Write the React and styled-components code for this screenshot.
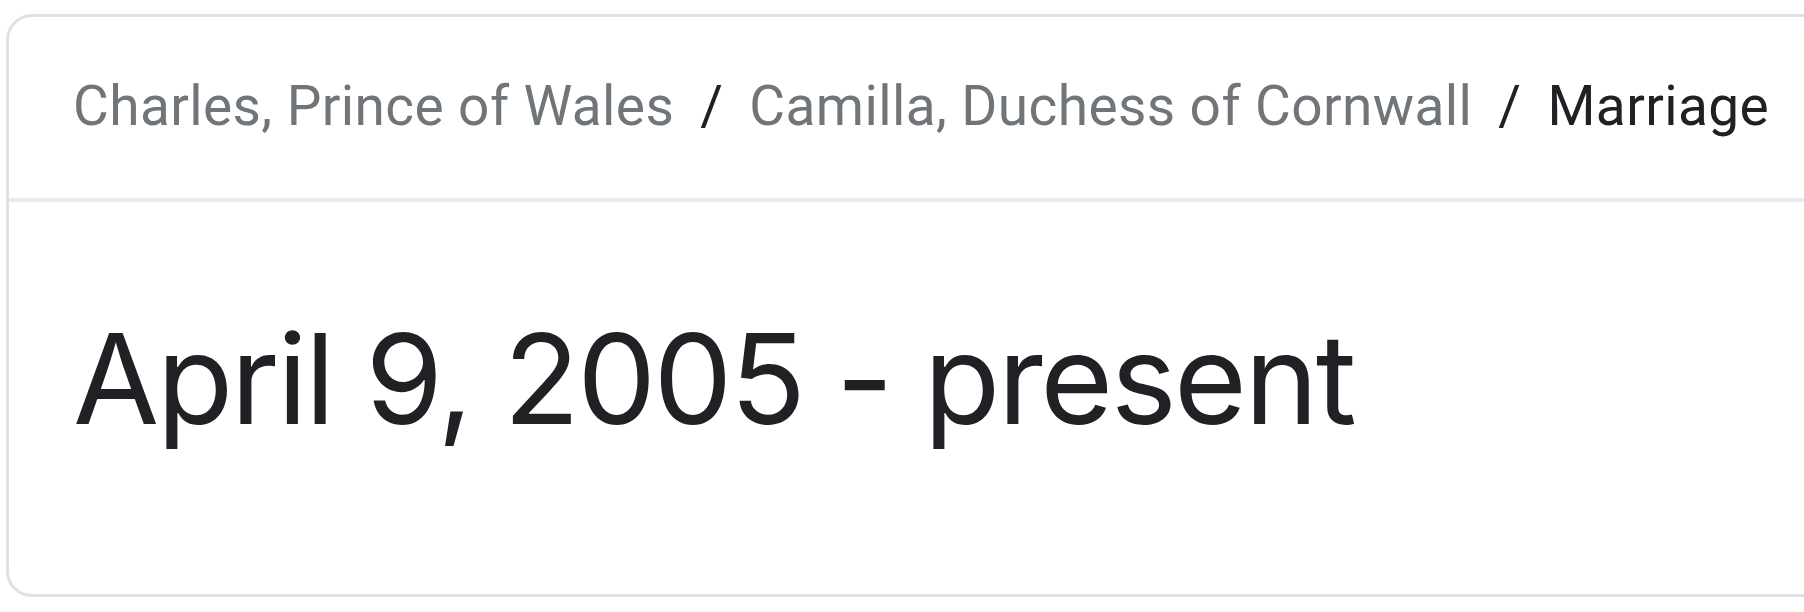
import React from "react";
import styled, { createGlobalStyle } from "styled-components";

const Global = createGlobalStyle`
  html, body { margin: 0; padding: 0; background: #ffffff; overflow: hidden; }
  body { width: 1804px; height: 612px; }
`;

const Page = styled.div`
  padding: 14px 0 0 6px;
`;

const Card = styled.section`
  width: 1860px;
  height: 583px;
  box-sizing: border-box;
  border: 3px solid #dfe1e5;
  border-radius: 26px;
  background: #fff;
  display: flex;
  flex-direction: column;
  overflow: hidden;
`;

const Header = styled.nav`
  height: 185px;
  box-sizing: border-box;
  flex: none;
  display: flex;
  align-items: center;
  padding: 0 0 4px 64px;
  border-bottom: 4px solid #e8eaed;
  font-family: Roboto, "Liberation Sans", sans-serif;
  font-size: 55px;
  letter-spacing: 0.4px;
  line-height: 60px;
`;

const Crumb = styled.span`
  color: ${(p) => (p.$current ? "#202124" : "#70757a")};
  white-space: nowrap;
`;

const Sep = styled.span`
  color: #202124;
  margin: 0 26px;
`;

const Body = styled.div`
  padding: 114px 0 0 64px;
`;

const Title = styled.h1`
  margin: 0;
  font-family: Inter, "Open Sans", sans-serif;
  font-weight: 400;
  font-size: 125px;
  line-height: 125px;
  letter-spacing: -2.5px;
  color: #202124;
  white-space: nowrap;
`;

const crumbs = ["Charles, Prince of Wales", "Camilla, Duchess of Cornwall", "Marriage"];

export default function App() {
  return (
    <>
      <Global />
      <Page>
        <Card>
          <Header>
            {crumbs.map((c, i) => (
              <React.Fragment key={c}>
                {i > 0 && <Sep>/</Sep>}
                <Crumb $current={i === crumbs.length - 1}>{c}</Crumb>
              </React.Fragment>
            ))}
          </Header>
          <Body>
            <Title>April 9, 2005 - present</Title>
          </Body>
        </Card>
      </Page>
    </>
  );
}
